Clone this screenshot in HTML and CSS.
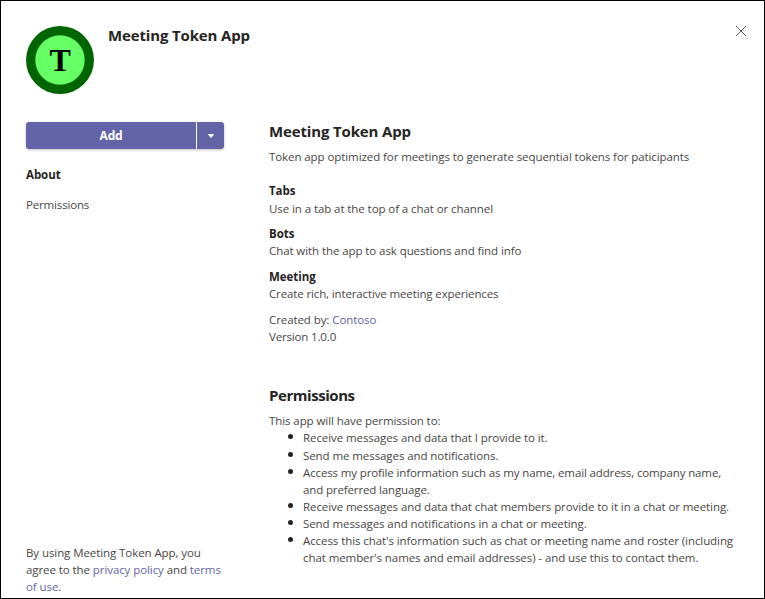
FILE: index.html
```html
<!DOCTYPE html>
<html lang="en">
<head>
<meta charset="utf-8">
<title>Meeting Token App</title>
<link rel="stylesheet" href="styles.css">
</head>
<body>
<main class="dialog">
  <header class="header">
    <svg class="logo" viewBox="0 0 68 68"><circle cx="34" cy="34" r="34" fill="#006400"/><circle cx="34" cy="34" r="24.7" fill="#66ff66"/><text class="logo-letter" x="34.2" y="45" text-anchor="middle">T</text></svg>
    <h1 class="heading app-name">Meeting Token App</h1>
    <svg class="close" viewBox="0 0 12 12"><path d="M1 1l10 10M11 1L1 11" stroke="#605e5c" stroke-width="1" fill="none"/></svg>
  </header>
  <div class="columns">
    <aside class="side">
      <div class="split">
        <button class="add">Add</button>
        <button class="more" aria-label="More"><svg class="caret" viewBox="0 0 6 4"><path d="M.6 0h4.8q.8.3.2 1L3.5 3.5q-.5.5-1 0L.4 1Q-.2.3.6 0z" fill="#fff"/></svg></button>
      </div>
      <nav class="nav">
        <a class="nav-item current">About</a>
        <a class="nav-item tight">Permissions</a>
      </nav>
      <p class="legal"><span class="line">By using Meeting Token App, you</span><span class="line">agree to the <a class="link">privacy policy</a> and <a class="link">terms</a></span><span class="line"><a class="link">of use</a>.</span></p>
    </aside>
    <div class="content">
      <h2 class="heading">Meeting Token App</h2>
      <p class="summary">Token app optimized for meetings to generate sequential tokens for paticipants</p>
      <section class="feature"><h3 class="sub">Tabs</h3><p>Use in a tab at the top of a chat or channel</p></section>
      <section class="feature"><h3 class="sub">Bots</h3><p>Chat with the app to ask questions and find info</p></section>
      <section class="feature"><h3 class="sub">Meeting</h3><p class="snug">Create rich, interactive meeting experiences</p></section>
      <div class="meta"><p>Created by: <a class="link">Contoso</a></p><p class="tight">Version 1.0.0</p></div>
      <h2 class="heading narrow">Permissions</h2>
      <p class="intro">This app will have permission to:</p>
      <ul class="list">
        <li>Receive messages and data that I provide to it.</li>
        <li>Send me messages and notifications.</li>
        <li class="snug">Access my profile information such as my name, email address, company name,<br>and preferred language.</li>
        <li>Receive messages and data that chat members provide to it in a chat or meeting.</li>
        <li>Send messages and notifications in a chat or meeting.</li>
        <li>Access this chat's information such as chat or meeting name and roster (including<br>chat member's names and email addresses) - and use this to contact them.</li>
      </ul>
    </div>
  </div>
</main>
</body>
</html>
```
FILE: styles.css
```css
* { box-sizing: border-box; }
body, h1, h2, h3, p, ul { margin: 0; padding: 0; }
body { font: 11.5px/17.14px "Open Sans", sans-serif; letter-spacing: -.08px; color: #484644; background: #fff; }
.dialog { width: 765px; height: 599px; border: 1px solid #000; padding: 25px 16px 0 25px; overflow: hidden; white-space: nowrap; }
.header { display: flex; align-items: flex-start; height: 96px; }
.logo { width: 68px; height: 68px; margin-right: 14px; }
.logo-letter { font: bold 32px "Liberation Serif", serif; letter-spacing: 0; fill: #000; }
.heading { font-size: 15px; line-height: 20px; font-weight: 700; letter-spacing: -.15px; color: #252423; }
.narrow { letter-spacing: -.45px; }
.app-name { margin-top: -1px; }
.close { width: 12px; height: 12px; margin: -1px 1px 0 auto; }
.columns { display: flex; }
.side { flex: none; width: 243px; height: 475px; display: flex; flex-direction: column; }
.split { display: flex; gap: 1px; width: 198px; height: 27px; border-radius: 3px; box-shadow: 0 1px 3px rgba(0,0,0,.25); }
.add, .more { border: 0; padding: 0; background: #6264a7; color: #fff; font: 700 12px/27px "Open Sans", sans-serif; letter-spacing: -.2px; }
.add { width: 170px; border-radius: 3px 0 0 3px; }
.more { width: 27px; border-radius: 0 3px 3px 0; display: flex; align-items: center; justify-content: center; }
.caret { width: 6px; height: 4px; }
.nav { display: flex; flex-direction: column; gap: 13px; margin-top: 17px; }
.current, .sub { font-size: 11.5px; font-weight: 700; letter-spacing: -.05px; color: #252423; }
.snug { letter-spacing: -.13px; }
.tight { letter-spacing: -.16px; }
.legal { margin-top: auto; margin-bottom: 2px; }
.line { display: block; }
.link { color: #6264a7; }
.content { margin-top: -1px; }
.summary { margin: 7px 0 17.3px; }
.feature { margin-bottom: 8.5px; }
.meta { margin-bottom: 39.7px; }
.intro { margin-top: 7.5px; }
.list { padding-left: 34px; list-style: none; }
.list li { position: relative; }
.list li::before { content: ""; position: absolute; left: -15px; top: 5px; width: 5px; height: 5px; border-radius: 50%; background: #252423; }
```
